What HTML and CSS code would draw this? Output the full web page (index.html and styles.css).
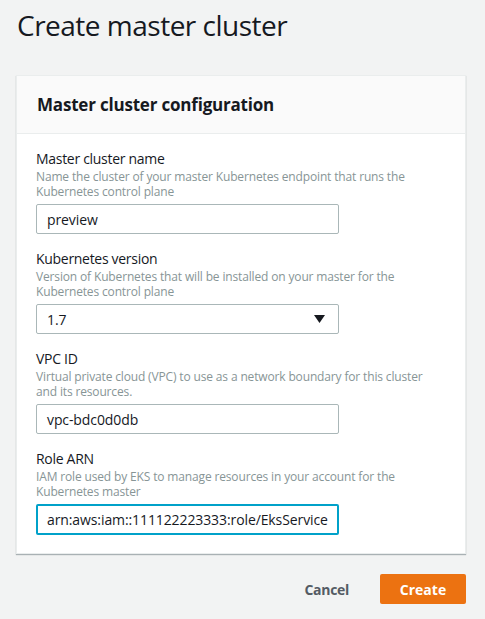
FILE: index.html
```html
<!DOCTYPE html>
<html>
<head>
<meta charset="utf-8">
<link rel="stylesheet" href="styles.css">
</head>
<body>
<div class="page">
  <h1 class="title">Create master cluster</h1>
  <section class="panel">
    <header class="panel-header">
      <h2 class="panel-title">Master cluster configuration</h2>
    </header>
    <div class="panel-body">
      <div class="field">
        <div class="label">Master cluster name</div>
        <div class="desc">Name the cluster of your master Kubernetes endpoint that runs the Kubernetes control plane</div>
        <div class="input">preview</div>
      </div>
      <div class="field">
        <div class="label">Kubernetes version</div>
        <div class="desc">Version of Kubernetes that will be installed on your master for the Kubernetes control plane</div>
        <div class="input select"><span>1.7</span>
          <svg class="caret" width="11" height="8" viewBox="0 0 11 8"><path d="M0 0H11L5.5 8Z" fill="#16191f"/></svg>
        </div>
      </div>
      <div class="field">
        <div class="label">VPC ID</div>
        <div class="desc">Virtual private cloud (VPC) to use as a network boundary for this cluster and its resources.</div>
        <div class="input">vpc-bdc0d0db</div>
      </div>
      <div class="field">
        <div class="label">Role ARN</div>
        <div class="desc">IAM role used by EKS to manage resources in your account for the Kubernetes master</div>
        <div class="input focused">arn:aws:iam::111122223333:role/EksService</div>
      </div>
    </div>
  </section>
  <div class="actions">
    <span class="btn-link">Cancel</span>
    <span class="btn-primary">Create</span>
  </div>
</div>
</body>
</html>
```
FILE: styles.css
```css
html, body {
  margin: 0;
  padding: 0;
  background: #f2f3f3;
}
body {
  font-family: "Open Sans", "Liberation Sans", sans-serif;
  color: #16191f;
}
.page {
  padding: 0 19px 0 16px;
}
.title {
  margin: 0;
  padding: 5px 0 0 1px;
  font-size: 28px;
  font-weight: 400;
  line-height: 40px;
  letter-spacing: -0.5px;
}
.panel {
  margin-top: 30px;
  background: #fff;
  border: 1px solid #eaeded;
  box-shadow: 0 1px 1px 0 rgba(0, 28, 36, 0.3);
}
.panel-header {
  height: 57px;
  background: #fafafa;
  border-bottom: 1px solid #eaeded;
  display: flex;
  align-items: center;
  padding-left: 20px;
}
.panel-title {
  margin: 0;
  font-size: 17px;
  font-weight: 700;
  letter-spacing: -0.2px;
}
.panel-body {
  padding: 15px 20px 18px 19px;
  display: flex;
  flex-direction: column;
  gap: 15px;
}
.label {
  font-size: 14px;
  line-height: 20px;
  letter-spacing: -0.3px;
  color: #16191f;
}
.desc {
  font-size: 12px;
  line-height: 15px;
  color: #879596;
  letter-spacing: -0.15px;
  margin-bottom: 5px;
  width: 400px;
}
.input {
  box-sizing: border-box;
  width: 303px;
  height: 30px;
  border: 1px solid #aab7b8;
  border-radius: 2px;
  padding: 0 10px;
  display: flex;
  align-items: center;
  font-size: 14px;
  letter-spacing: -0.1px;
  color: #16191f;
  background: #fff;
}
.select {
  justify-content: space-between;
  padding-right: 13px;
}
.caret {
  display: block;
}
.focused {
  border: 2px solid #00a1c9;
  height: 31px;
  padding-left: 9px;
  white-space: nowrap;
  overflow: hidden;
}
.actions {
  display: flex;
  justify-content: flex-end;
  align-items: center;
  margin-top: 20px;
  gap: 31px;
}
.btn-link {
  font-size: 14px;
  font-weight: 700;
  letter-spacing: -0.3px;
  color: #545b64;
}
.btn-primary {
  width: 86px;
  height: 30px;
  box-sizing: border-box;
  background: #ec7211;
  color: #fff;
  border-radius: 2px;
  font-size: 14px;
  font-weight: 700;
  display: flex;
  align-items: center;
  justify-content: center;
}
```
